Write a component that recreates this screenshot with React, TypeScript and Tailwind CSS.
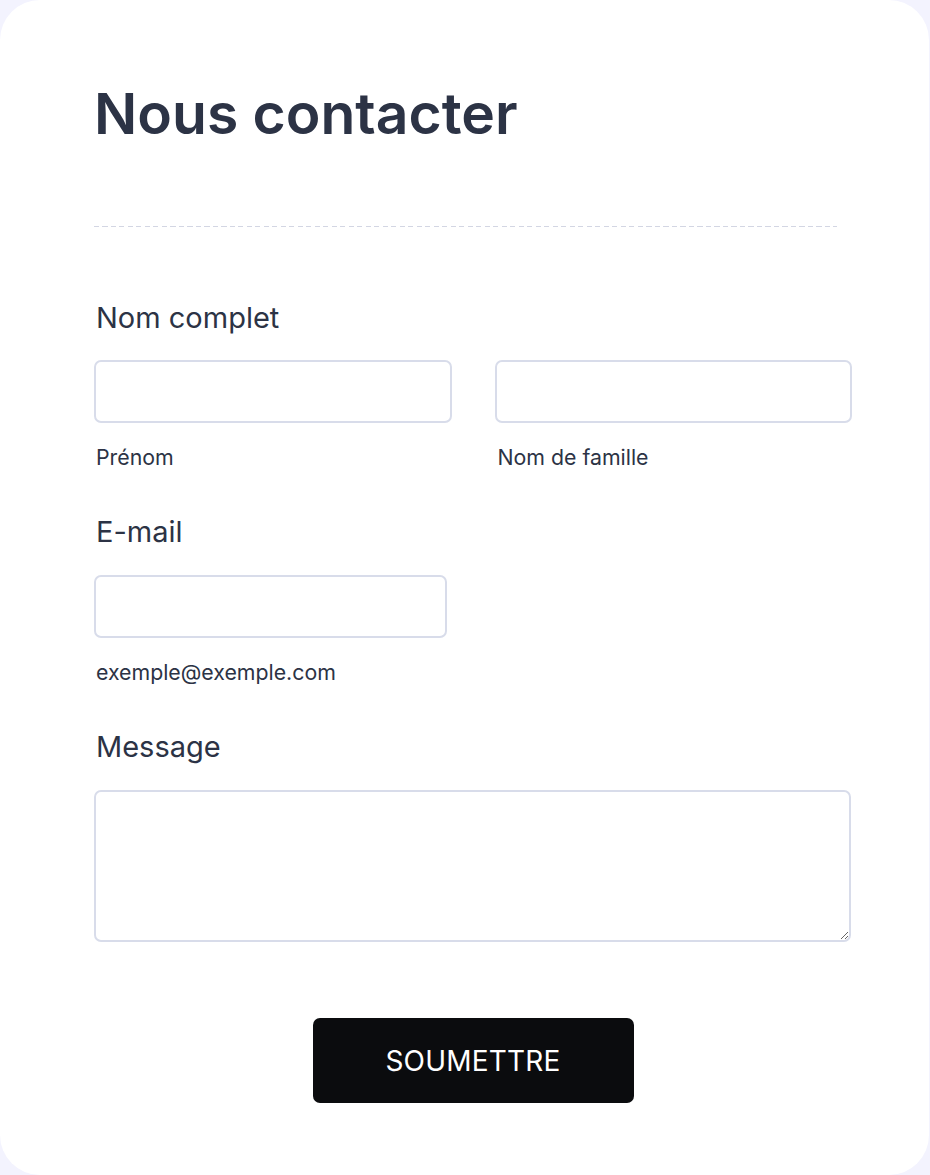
import React from "react";

export default function App() {
  const font = { fontFamily: "Inter, 'Noto Sans', sans-serif" };
  return (
    <div className="min-h-[1175px] w-full bg-[#f3f3fe]" style={font}>
      <div className="min-h-[1175px] w-[929px] rounded-[40px] bg-white pt-[83px] pl-[94px]">
        <div className="w-[758px] flex flex-col">
          <h1 className="mt-[2px] text-[57px] leading-[57px] font-semibold text-[#2c3345]">
            Nous contacter
          </h1>
          <div className="mt-[84px] h-px w-[743px] bg-[repeating-linear-gradient(to_right,#d3d6e3_0px,#d3d6e3_5px,transparent_5px,transparent_8.5px)]" />

          <label className="mt-[75px] ml-[2px] text-[29px] leading-[32px] text-[#2c3345]">
            Nom complet
          </label>
          <div className="mt-[26px] grid grid-cols-2 gap-[43px]">
            <div className="flex flex-col">
              <input className="h-[63px] w-full rounded-[7px] border-2 border-[#d8dcea] bg-white outline-none" />
              <span className="mt-[21px] ml-[2px] text-[21.3px] leading-[26px] text-[#2c3345]">Prénom</span>
            </div>
            <div className="flex flex-col">
              <input className="h-[63px] w-full rounded-[7px] border-2 border-[#d8dcea] bg-white outline-none" />
              <span className="mt-[21px] ml-[3px] text-[21.3px] leading-[26px] text-[#2c3345]">Nom de famille</span>
            </div>
          </div>

          <label className="mt-[46px] ml-[2px] text-[29px] leading-[32px] text-[#2c3345]">E-mail</label>
          <input className="mt-[27px] h-[63px] w-[353px] rounded-[7px] border-2 border-[#d8dcea] bg-white outline-none" />
          <span className="mt-[21px] ml-[2px] text-[21.3px] leading-[26px] text-[#2c3345]">exemple@exemple.com</span>

          <label className="mt-[46px] ml-[2px] text-[29px] leading-[32px] text-[#2c3345]">Message</label>
          <textarea className="mt-[27px] h-[152px] w-[757px] rounded-[7px] border-2 border-[#d8dcea] bg-white outline-none" />

          <div className="mt-[76px] flex justify-center">
            <button className="h-[85px] w-[321px] rounded-[7px] bg-[#0b0c0e] text-[28px] text-white tracking-[0.2px]">
              SOUMETTRE
            </button>
          </div>
        </div>
      </div>
    </div>
  );
}
